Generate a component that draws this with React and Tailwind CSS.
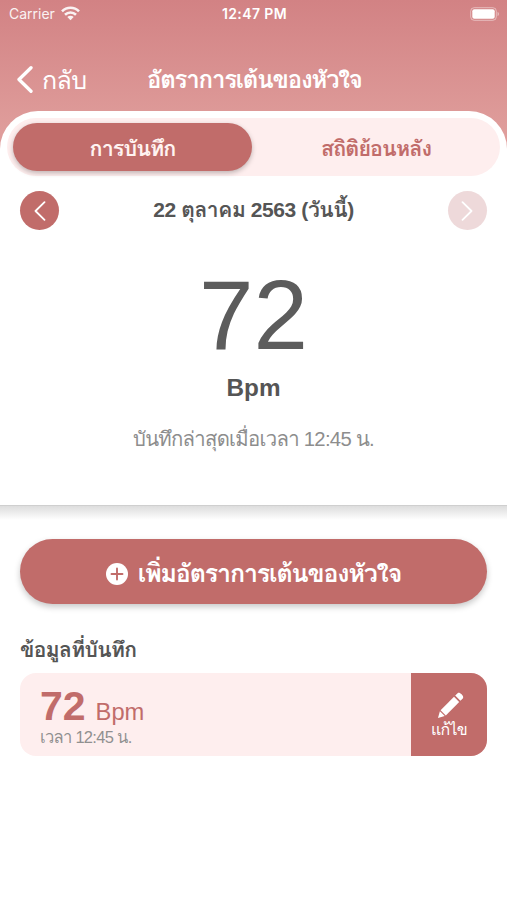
import React from 'react'

const WifiIcon = () => (
  <svg width="19" height="15" viewBox="0 0 19 15" fill="none" stroke="currentColor" strokeWidth="2.6">
    <path d="M1 5.3C5.7.6 13.3.6 18 5.3" />
    <path d="M4 8.7c3.1-3 7.9-3 11 0" />
    <path d="M6.300 10.900c1.800-1.600 4.600-1.600 6.400 0L9.500 14.200z" fill="currentColor" stroke="none" />
  </svg>
)

const BatteryIcon = () => (
  <svg width="30" height="14" viewBox="0 0 30 14" fill="none">
    <rect x="0.7" y="0.7" width="25.6" height="12.6" rx="3.5" stroke="#fff" strokeOpacity="0.45" />
    <rect x="2.3" y="2.3" width="22.4" height="9.4" rx="2" fill="#fff" />
    <path d="M27.6 4.800v4.400c1.800-.8 1.800-3.600 0-4.400z" fill="#fff" fillOpacity="0.5" />
  </svg>
)

const Chevron = ({ direction = 'left', weight = 1.8, className }) => (
  <svg viewBox="0 0 12 20" className={className} fill="none" stroke="currentColor" strokeWidth={weight} strokeLinecap="round" strokeLinejoin="round">
    <path d={direction === 'left' ? 'M10.500 1.200 1.500 10l9 8.800' : 'M1.500 1.200l9 8.800-9 8.800'} />
  </svg>
)

const PlusIcon = () => (
  <svg width="22" height="22" viewBox="0 0 22 22">
    <circle cx="11" cy="11" r="11" fill="#fff" />
    <path d="M11 5.500v11M5.500 11h11" stroke="#c16c6a" strokeWidth="1.9" strokeLinecap="round" />
  </svg>
)

const PencilIcon = () => (
  <svg width="26" height="26" viewBox="0 0 26 26" fill="#fff">
    <path d="M1.900 19.300 0 26l6.700-1.900z" />
    <path d="M2.600 18.200 16 4.800l5.200 5.200L7.800 23.400z" />
    <path d="m17.200 3.600 2.400-2.400c1.900-1.900 7.100 3.300 5.200 5.200l-2.400 2.400z" />
  </svg>
)

const StatusBar = () => (
  <div className="grid h-[27px] grid-cols-3 items-center pl-[9px] pr-[7px] font-['Inter',sans-serif] text-[14px] text-white">
    <div className="flex items-center gap-1.5 opacity-90">
      <span>Carrier</span>
      <WifiIcon />
    </div>
    <span className="text-center text-[14px] font-semibold tracking-[0.4px]">12:47 PM</span>
    <div className="flex justify-end">
      <BatteryIcon />
    </div>
  </div>
)

const NavBar = () => (
  <div className="mt-[24px] flex h-[60px] items-center pb-[2px] text-white">
    <button className="flex w-[147px] items-center gap-[9px] pl-[17px]">
      <Chevron weight={2.5} className="mb-px h-[27px] w-[16px]" />
      <span className="text-[25px] leading-none tracking-[-0.6px]">กลับ</span>
    </button>
    <h1 className="whitespace-nowrap text-[24px] font-bold leading-none tracking-[-1.2px]">อัตราการเต้นของหัวใจ</h1>
  </div>
)

const Tabs = () => (
  <div className="mx-[7px] flex h-[58px] rounded-full bg-[#feeeee] text-[21.5px] font-bold tracking-[-0.9px]">
    <button className="my-[5px] ml-[6px] w-[239px] rounded-full bg-[#c16c6a] pt-[5px] text-[#fff3f1] shadow-[0_2px_5px_rgba(0,0,0,0.25)]">
      การบันทึก
    </button>
    <button className="flex-1 pt-[5px] text-[#c16c6a]">สถิติย้อนหลัง</button>
  </div>
)

const DateSwitcher = () => (
  <div className="mt-[15px] flex items-center justify-between px-5">
    <button className="flex size-[39px] items-center justify-center rounded-full bg-[#c16c6a] text-white">
      <Chevron className="h-[20px] w-[12px]" />
    </button>
    <span className="pb-[3px] text-[21px] font-bold leading-none tracking-[-0.4px] text-[#555]">22 ตุลาคม 2563 (วันนี้)</span>
    <button className="flex size-[39px] items-center justify-center rounded-full bg-[#eed9da] text-white">
      <Chevron direction="right" className="h-[20px] w-[12px]" />
    </button>
  </div>
)

const CurrentRate = () => (
  <div className="flex flex-col items-center pt-[35px]">
    <span className="text-[98px] leading-[100px] text-[#5c5c5c]">72</span>
    <span className="mt-[8px] text-[24.3px] font-bold leading-[30px] text-[#555]">Bpm</span>
    <span className="mt-[21px] text-[20.3px] leading-[30px] tracking-[-0.7px] text-[#8d8d8d]">บันทึกล่าสุดเมื่อเวลา 12:45 น.</span>
  </div>
)

const RecordRow = ({ value, time }) => (
  <div className="flex h-[83px] overflow-hidden rounded-[16px] bg-[#feeeee]">
    <div className="flex-1 pl-[20px] pt-[11px]">
      <div className="flex items-baseline gap-[10px] leading-[44px] text-[#c16c6a]">
        <span className="text-[41px] font-bold">{value}</span>
        <span className="text-[23.7px]">Bpm</span>
      </div>
      <div className="-mt-[4px] text-[16.5px] leading-[14px] tracking-[-0.7px] text-[#909090]">เวลา {time} น.</div>
    </div>
    <button className="flex w-[76px] flex-col items-center bg-[#c16c6a] pt-[19px] text-white">
      <span className="pl-[3px]">
        <PencilIcon />
      </span>
      <span className="mt-[2px] text-[16px] leading-[20px] tracking-[-0.8px]">แก้ไข</span>
    </button>
  </div>
)

const App = () => {
  return (
    <div className="h-[900px] w-[507px] overflow-hidden bg-white font-['Liberation_Sans','Loma','Noto_Sans_Thai_Looped','Waree','Garuda',sans-serif]">
      <div className="bg-linear-to-b from-[#d28284] to-[#df9d9b] to-[130px]">
        <StatusBar />
        <NavBar />
        <div className="h-[394px] rounded-t-[38px] bg-white pt-[7px]">
          <Tabs />
          <DateSwitcher />
          <CurrentRate />
        </div>
      </div>
      {/* Soft edge under the summary panel */}
      <div className="h-[15px] border-t border-[#cfcfcf] bg-linear-to-b from-[#dddddd] to-white" />

      <div className="px-5 pt-[19px]">
        <button className="flex h-[65px] w-full items-center justify-center gap-[10px] rounded-full bg-[#c16c6a] text-white shadow-[0_3px_6px_rgba(0,0,0,0.22)]">
          <span className="pt-[4px]">
            <PlusIcon />
          </span>
          <span className="pt-[4px] text-[25px] font-bold leading-none tracking-[-1.15px]">เพิ่มอัตราการเต้นของหัวใจ</span>
        </button>
        <h2 className="mb-[8px] mt-[30px] text-[21px] font-bold leading-[31px] tracking-[-0.6px] text-[#555]">ข้อมูลที่บันทึก</h2>
        <RecordRow value="72" time="12:45" />
      </div>
    </div>
  )
}

export default App
